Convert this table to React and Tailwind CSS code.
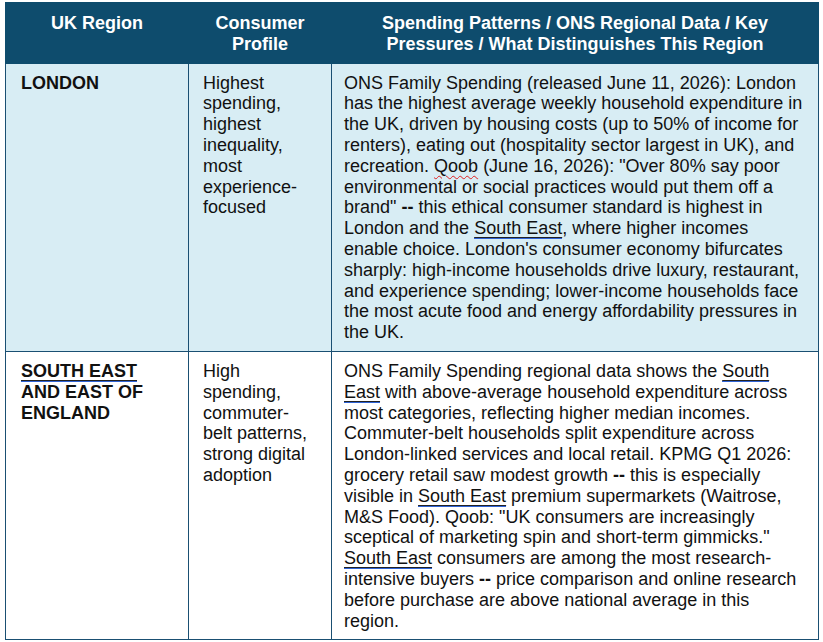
import React from "react";

const SE = ({ children }) => (
  <span className="border-b border-[#2f63d6] underline decoration-[#222] decoration-1 underline-offset-[3px]">
    {children}
  </span>
);

const rows = [
  {
    region: <>LONDON</>,
    profile: "Highest spending, highest inequality, most experience-focused",
    bg: "bg-[#d8edf4]",
    body: (
      <>
        ONS Family Spending (released June 11, 2026): London has the highest
        average weekly household expenditure in the UK, driven by housing costs
        (up to 50% of income for renters), eating out (hospitality sector
        largest in UK), and recreation.{" "}
        <span className="underline decoration-wavy decoration-[#e02020] decoration-1 underline-offset-[3px]">
          Qoob
        </span>{" "}
        (June 16, 2026): "Over 80% say poor environmental or social practices
        would put them off a brand" <b>--</b> this ethical consumer standard is
        highest in London and the <SE>South East</SE>, where higher incomes
        enable choice. London's consumer economy bifurcates sharply: high-income
        households drive luxury, restaurant, and experience spending;
        lower-income households face the most acute food and energy
        affordability pressures in the UK.
      </>
    ),
  },
  {
    region: (
      <>
        <SE>SOUTH EAST</SE> AND EAST OF ENGLAND
      </>
    ),
    profile: "High spending, commuter-belt patterns, strong digital adoption",
    bg: "bg-white",
    body: (
      <>
        ONS Family Spending regional data shows the <SE>South East</SE> with
        above-average household expenditure across most categories, reflecting
        higher median incomes. Commuter-belt households split expenditure across
        London-linked services and local retail. KPMG Q1 2026: grocery retail
        saw modest growth <b>--</b> this is especially visible in{" "}
        <SE>South East</SE> premium supermarkets (Waitrose, M&amp;S Food). Qoob:
        "UK consumers are increasingly sceptical of marketing spin and
        short-term gimmicks." <SE>South East</SE> consumers are among the most
        research-intensive buyers <b>--</b> price comparison and online research
        before purchase are above national average in this region.
      </>
    ),
  },
];

export default function App() {
  return (
    <div className="h-[642px] w-[823px] overflow-hidden bg-white pl-[5px] pt-[2px] font-['Liberation_Sans',Arial,sans-serif] text-[18px] leading-[20.8px] text-[#111]">
      <table className="w-[813px] table-fixed border-collapse">
        <colgroup>
          <col className="w-[183px]" />
          <col className="w-[143px]" />
          <col className="w-[487px]" />
        </colgroup>
        <thead>
          <tr className="bg-[#0e4c6d] text-white">
            <th className="border border-[#0e4c6d] px-[12px] pb-[8px] pt-[10px] align-top font-bold">
              UK Region
            </th>
            <th className="border border-[#0e4c6d] px-[12px] pb-[8px] pt-[10px] align-top font-bold">
              Consumer Profile
            </th>
            <th className="border border-[#0e4c6d] px-[12px] pb-[8px] pt-[10px] align-top font-bold">
              Spending Patterns / ONS Regional Data / Key Pressures / What
              Distinguishes This Region
            </th>
          </tr>
        </thead>
        <tbody>
          {rows.map((r, i) => (
            <tr key={i} className={r.bg}>
              <td className="border border-[#1a4f72] pb-[8px] pl-[15px] pr-[12px] pt-[9px] align-top font-bold">
                {r.region}
              </td>
              <td className="border border-[#1a4f72] pb-[8px] pl-[14px] pr-[16px] pt-[9px] align-top">
                {r.profile}
              </td>
              <td className="border border-[#1a4f72] pb-[8px] pl-[12px] pr-[12px] pt-[9px] align-top">
                {r.body}
              </td>
            </tr>
          ))}
        </tbody>
      </table>
    </div>
  );
}
